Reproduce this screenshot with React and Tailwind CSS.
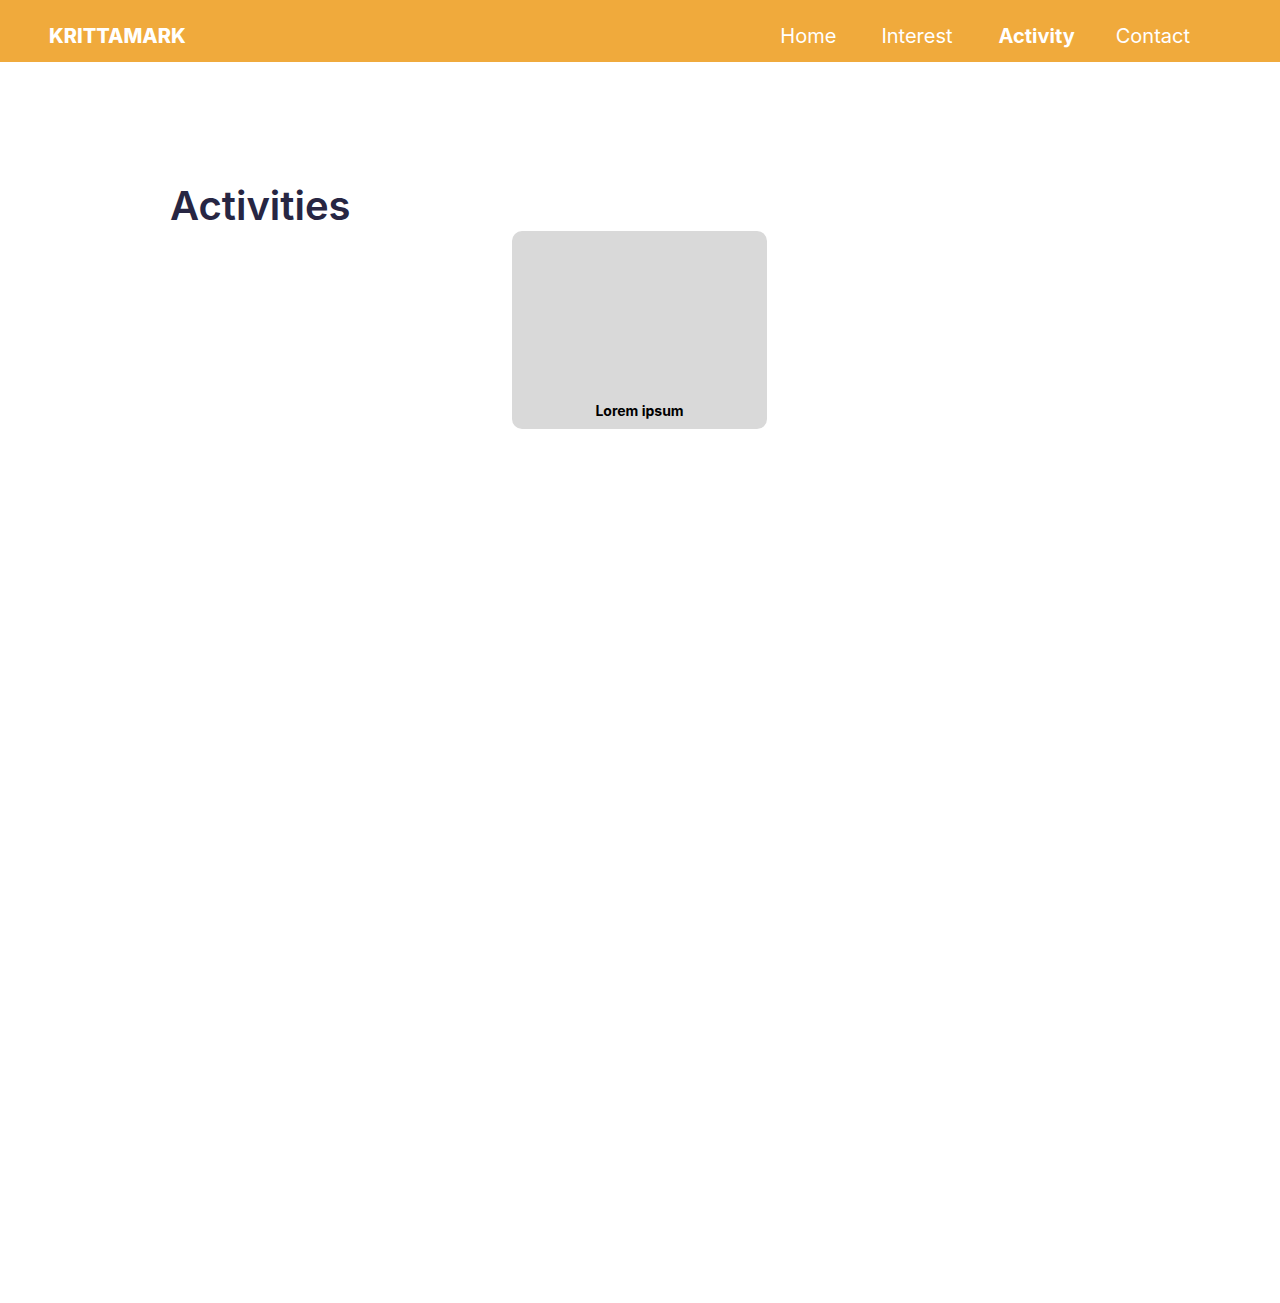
const navItems = [
  { label: 'Home', gap: '' },
  { label: 'Interest', gap: 'ml-[45px]' },
  { label: 'Activity', gap: 'ml-[46px]', active: true },
  { label: 'Contact', gap: 'ml-[41px]' },
]

export default function App() {
  return (
    <div className="min-h-[1303px] bg-white font-['Inter',sans-serif]">
      <header className="h-[62px] bg-[#f0aa3c] flex items-center justify-between pt-[10px] pl-[49px] pr-[90px]">
        <a href="#" className="text-[20px] font-extrabold text-white">
          KRITTAMARK
        </a>
        <nav className="flex items-center">
          {navItems.map(({ label, gap, active }) => (
            <a
              key={label}
              href="#"
              className={`${gap} text-[20px] text-white ${active ? 'font-bold' : 'font-normal'}`}
            >
              {label}
            </a>
          ))}
        </nav>
      </header>

      <main className="pt-[120px]">
        <h1 className="pl-[170px] mb-[1px] text-[40px] leading-[48px] font-semibold text-[#272643]">
          Activities
        </h1>
        <div className="flex justify-center pr-[1px]">
          <div className="w-[255px] h-[198px] rounded-[10px] bg-[#d9d9d9] flex items-end justify-center pb-[8px]">
            <span className="text-[14px] font-bold text-black">Lorem ipsum</span>
          </div>
        </div>
      </main>
    </div>
  )
}
